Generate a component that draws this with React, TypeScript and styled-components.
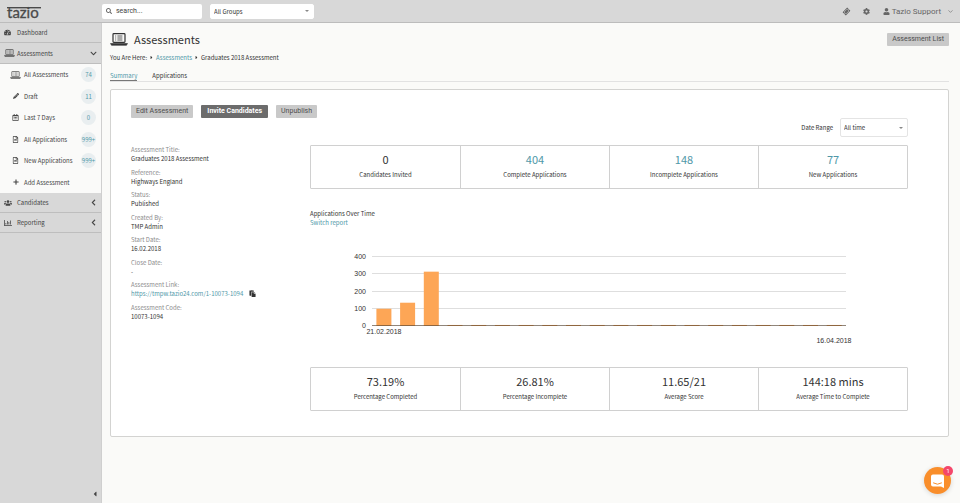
import React from "react";
import styled, { createGlobalStyle } from "styled-components";
import {
  FaTachometerAlt, FaPencilAlt, FaRegCalendarAlt, FaRegFileAlt, FaPlus, FaUsers, FaRegChartBar,
  FaChevronDown, FaChevronLeft, FaCog, FaUser, FaTicketAlt, FaPaste, FaCaretRight, FaCaretLeft, FaSearch,
} from "react-icons/fa";
import { ChevronDown } from "lucide-react";

const source = `"Noto Sans CJK SC", "Noto Sans", sans-serif`;
const ui = `Roboto, "Liberation Sans", sans-serif`;
const teal = "#4f98a8";

const GlobalStyle = createGlobalStyle`
  *, *::before, *::after { box-sizing: border-box; }
  body { margin: 0; background: #fafaf8; color: #333; font: 6px/9px ${source}; }
  button, input, select { font: inherit; color: inherit; margin: 0; }
  a { color: ${teal}; text-decoration: none; }
  h1, h2, p, ul, dl, dd { margin: 0; padding: 0; font-weight: 400; }
  ul { list-style: none; }
  svg { display: block; flex: none; }
`;

const Page = styled.div`
  min-height: 100vh;
  display: flex;
  flex-direction: column;
`;
const TopBar = styled.header`
  display: flex;
  align-items: center;
  height: 23px;
  padding-right: 6px;
  background: #d8d8d8;
  border-bottom: 1px solid #bcbcbc;
  color: #666;
  font: 8px/12px ${ui};
`;
const LogoLink = styled.a`
  width: 102px;
  padding-left: 6px;
`;
const SearchBox = styled.label`
  display: flex;
  align-items: center;
  gap: 4px;
  width: 100px;
  height: 15px;
  padding: 0 4px;
  background: #fff;
  border-radius: 2px;
  font-size: 7px;
`;
const SearchInput = styled.input`
  flex: 1;
  min-width: 0;
  height: 15px;
  padding: 0;
  border: 0;
  outline: 0;
  background: none;
  &::placeholder { color: #444; opacity: 1; }
`;
const SelectWrap = styled.div<{ $width: number; $height: number; $outlined?: boolean }>`
  display: flex;
  align-items: center;
  width: ${(p) => p.$width}px;
  height: ${(p) => p.$height}px;
  padding: 0 4px 0 0;
  background: #fff;
  border-radius: 2px;
  border: 1px solid ${(p) => (p.$outlined ? "#e4e4e4" : "#fff")};
`;
const Select = styled.select`
  flex: 1;
  height: 100%;
  min-width: 0;
  padding: 0 3px;
  border: 0;
  outline: 0;
  appearance: none;
  background: none;
  color: #333;
  font: 6px/9px ${source};
`;
const DropMark = styled.span`
  border: 2px solid transparent;
  border-top-color: #888;
  border-bottom: 0;
`;
const GroupArea = styled.div`
  margin-left: 8px;
`;
const TopActions = styled.div`
  display: flex;
  align-items: center;
  gap: 13px;
  margin-left: auto;
`;
const PlainButton = styled.button`
  display: flex;
  align-items: center;
  gap: 2px;
  padding: 0;
  border: 0;
  background: none;
`;
const UserButton = styled(PlainButton)`
  height: 22px;
  padding-top: 1px;
  svg:last-child { margin-left: 4px; }
`;
const Body = styled.div`
  flex: 1;
  display: flex;
`;
const Sidebar = styled.nav`
  display: flex;
  flex-direction: column;
  width: 102px;
  flex: none;
  background: #d8d8d8;
  border-right: 1px solid #cfcfcf;
  color: #444;
`;
const SideHeading = styled.a<{ $height: number }>`
  display: flex;
  align-items: center;
  gap: 2px;
  height: ${(p) => p.$height}px;
  padding: 0 4px;
  border-bottom: 1px solid #bebebe;
  color: #444;
  svg:last-child:not(:first-child) { margin-left: auto; }
`;
const HeadingIcon = styled.span`
  width: 11px;
`;
const SubIcon = styled.span`
  display: flex;
  justify-content: center;
  width: 11px;
`;
const SubList = styled.ul`
  display: grid;
  grid-template-rows: repeat(6, 1fr);
  height: 129px;
  background: #fafaf9;
`;
const SubLink = styled.a`
  display: flex;
  align-items: center;
  gap: 3px;
  height: 100%;
  padding: 0 5px 0 10px;
  color: #444;
  white-space: nowrap;
`;
const Count = styled.span`
  display: flex;
  align-items: center;
  justify-content: center;
  width: 15px;
  height: 15px;
  margin-left: auto;
  border-radius: 50%;
  background: #e9eef0;
  color: #4f98a8;
`;
const Collapse = styled(PlainButton)`
  margin: auto 2px 5px auto;
`;
const Main = styled.main`
  flex: 1;
  min-width: 0;
  padding: 9px 11px 66px 8px;
`;
const TitleRow = styled.div`
  display: flex;
  align-items: center;
  gap: 6px;
  height: 14px;
`;
const Title = styled.h1`
  font-size: 11px;
  line-height: 14px;
`;
const Button = styled.button<{ $strong?: boolean }>`
  height: 13px;
  padding: 0 ${(p) => (p.$strong ? 6 : 5)}px;
  border: 0;
  border-radius: 1px;
  background: ${(p) => (p.$strong ? "#6c6c6c" : "#c9c9c9")};
  color: ${(p) => (p.$strong ? "#fff" : "#4d4d4d")};
  font: ${(p) => (p.$strong ? 700 : 400)} 7px/13px ${ui};
  white-space: nowrap;
`;
const TitleAction = styled.div`
  display: flex;
  margin-left: auto;
`;
const Crumbs = styled.nav`
  display: flex;
  align-items: center;
  gap: 2px;
  height: 9px;
  margin-top: 7px;
`;
const Tabs = styled.nav`
  display: flex;
  gap: 15px;
  margin-top: 9px;
  border-bottom: 1px solid #e2e2e2;
`;
const Tab = styled.a<{ $active?: boolean }>`
  height: 10px;
  line-height: 9px;
  color: ${(p) => (p.$active ? teal : "#333")};
  border-bottom: 1px solid ${(p) => (p.$active ? "#777" : "transparent")};
`;
const Card = styled.section`
  margin-top: 7px;
  padding: 15px 40px 25px 20px;
  background: #fff;
  border: 1px solid #d3d3d1;
  border-radius: 2px;
`;
const ButtonRow = styled.div`
  display: flex;
  gap: 8px;
`;
const RangeRow = styled.div`
  display: flex;
  align-items: center;
  justify-content: flex-end;
  gap: 7px;
`;
const Columns = styled.div`
  display: grid;
  grid-template-columns: 179px minmax(0, 1fr);
  margin-top: 8px;
`;
const Details = styled.dl`
  display: flex;
  flex-direction: column;
  justify-content: space-between;
  height: 176px;
`;
const Term = styled.dt`
  color: #8c8c8c;
`;
const Value = styled.dd`
  display: flex;
  align-items: center;
  gap: 6px;
  color: #333;
`;
const Stats = styled.div`
  display: grid;
  grid-template-columns: repeat(4, 1fr);
  height: 44px;
  border: 1px solid #d0d0d0;
  border-radius: 1px;
`;
const Stat = styled.div`
  padding-top: 6px;
  text-align: center;
  & + & { border-left: 1px solid #d0d0d0; }
`;
const Figure = styled.p`
  font-size: 11px;
  line-height: 15px;
`;
const Caption = styled.p`
  margin-top: 3px;
`;
const ReportHead = styled.div`
  margin: 20px 0 23px;
`;
const ReportTitle = styled.h2`
  font-size: 6px;
  line-height: 9px;
`;
const Chart = styled.svg`
  width: 100%;
  height: auto;
  margin-bottom: 17px;
  font: 7px "Liberation Sans", sans-serif;
  fill: #333;
`;
const Chat = styled.button`
  position: fixed;
  right: 9px;
  bottom: 9px;
  display: flex;
  align-items: center;
  justify-content: center;
  width: 27px;
  height: 27px;
  padding: 0;
  border: 0;
  border-radius: 50%;
  background: #f98e2b;
  box-shadow: 0 1px 5px rgba(0, 0, 0, 0.15);
`;
const ChatBadge = styled.span`
  position: absolute;
  top: -1px;
  right: -2px;
  width: 10px;
  height: 10px;
  border-radius: 50%;
  background: #f4476b;
  color: #fff;
  font: 6px/10px ${ui};
`;

const Laptop = ({ width = 11 }: { width?: number }) => (
  <svg width={width} viewBox="0 0 18 13" fill="none" stroke="currentColor">
    <rect x="3" y="0.7" width="12" height="8.6" rx="0.8" strokeWidth="1.2" />
    <path d="M5.2 3h1M7.4 3h5M5.2 5h1M7.4 5h5M5.2 7h1M7.4 7h5" strokeWidth="0.8" />
    <path d="M0.5 10.5h17l-1 1.8h-15z" fill="currentColor" strokeWidth="0.6" />
  </svg>
);

const Logo = () => (
  <svg width="40" height="22" viewBox="0 0 40 22" role="img" aria-label="tazio" fill="#4b4b4b">
    <text x="1" y="18" fontFamily="Lato, sans-serif" fontSize="15" stroke="#4b4b4b" strokeWidth="0.3">tazio</text>
    <rect x="1" y="7" width="34" height="1.4" />
  </svg>
);

const subItems = [
  { label: "All Assessments", icon: <Laptop />, count: "74" },
  { label: "Draft", icon: <FaPencilAlt size={6} />, count: "11" },
  { label: "Last 7 Days", icon: <FaRegCalendarAlt size={7} />, count: "0" },
  { label: "All Applications", icon: <FaRegFileAlt size={7} />, count: "999+" },
  { label: "New Applications", icon: <FaRegFileAlt size={7} />, count: "999+" },
  { label: "Add Assessment", icon: <FaPlus size={6} /> },
];

const link = "https://tmpw.tazio24.com/1-10073-1094";
const details: [string, string][] = [
  ["Assessment Title:", "Graduates 2018 Assessment"],
  ["Reference:", "Highways England"],
  ["Status:", "Published"],
  ["Created By:", "TMP Admin"],
  ["Start Date:", "16.02.2018"],
  ["Close Date:", "-"],
  ["Assessment Link:", link],
  ["Assessment Code:", "10073-1094"],
];

type Item = { value: string; label: string; link?: boolean };
const counts: Item[] = [
  { value: "0", label: "Candidates Invited" },
  { value: "404", label: "Complete Applications", link: true },
  { value: "148", label: "Incomplete Applications", link: true },
  { value: "77", label: "New Applications", link: true },
];
const averages: Item[] = [
  { value: "73.19%", label: "Percentage Completed" },
  { value: "26.81%", label: "Percentage Incomplete" },
  { value: "11.65/21", label: "Average Score" },
  { value: "144:18 mins", label: "Average Time to Complete" },
];
const series: number[] = [100, 135, 315, ...Array(17).fill(6)];

const StatRow = ({ items }: { items: Item[] }) => (
  <Stats>
    {items.map((s) => (
      <Stat key={s.label}>
        <Figure>{s.link ? <a href="#list">{s.value}</a> : s.value}</Figure>
        <Caption>{s.label}</Caption>
      </Stat>
    ))}
  </Stats>
);

const baseY = 76;
const left = 62;
const step = 474 / series.length;
const y = (v: number) => baseY - (v / 400) * 69;

const ApplicationsChart = () => (
  <Chart viewBox="0 0 598 100" role="img" aria-label="Applications over time">
    {[400, 300, 200, 100, 0].map((v) => (
      <g key={v}>
        {v > 0 && <rect x={left} y={Math.round(y(v)) - 1} width="474" height="1" fill="#dedede" />}
        <text x="56" y={y(v) + 2} textAnchor="end">{v}</text>
      </g>
    ))}
    {series.map((v, i) => (
      <rect key={i} x={left + i * step + 4.4} y={y(v)} width="15" height={baseY - y(v)} fill="#fda656" />
    ))}
    <rect x={left} y={baseY - 1} width="474" height="1" fill="#554433" opacity="0.65" />
    <text x="74" y="84" textAnchor="middle">21.02.2018</text>
    <text x="524" y="93" textAnchor="middle">16.04.2018</text>
  </Chart>
);

export default function App() {
  return (
    <Page>
      <GlobalStyle />
      <TopBar>
        <LogoLink href="#home"><Logo /></LogoLink>
        <SearchBox>
          <FaSearch size={6} />
          <SearchInput placeholder="search..." aria-label="Search" />
        </SearchBox>
        <GroupArea>
          <SelectWrap $width={104} $height={15}>
            <Select aria-label="Group"><option>All Groups</option></Select>
            <DropMark />
          </SelectWrap>
        </GroupArea>
        <TopActions>
          <PlainButton aria-label="Tickets"><FaTicketAlt size={7} transform="rotate(-45)" /></PlainButton>
          <PlainButton aria-label="Settings"><FaCog size={7} /></PlainButton>
          <UserButton><FaUser size={7} />Tazio Support<ChevronDown size={7} /></UserButton>
        </TopActions>
      </TopBar>
      <Body>
        <Sidebar aria-label="Main">
          <SideHeading href="#dashboard" $height={20}><HeadingIcon><FaTachometerAlt size={7} /></HeadingIcon>Dashboard</SideHeading>
          <SideHeading href="#assessments" $height={21}><HeadingIcon><Laptop /></HeadingIcon>Assessments<FaChevronDown size={7} /></SideHeading>
          <SubList>
            {subItems.map((s) => (
              <li key={s.label}>
                <SubLink href="#assessments">
                  <SubIcon>{s.icon}</SubIcon>
                  {s.label}
                  {s.count && <Count>{s.count}</Count>}
                </SubLink>
              </li>
            ))}
          </SubList>
          <SideHeading href="#candidates" $height={20}><HeadingIcon><FaUsers size={8} /></HeadingIcon>Candidates<FaChevronLeft size={7} /></SideHeading>
          <SideHeading href="#reporting" $height={20}><HeadingIcon><FaRegChartBar size={8} /></HeadingIcon>Reporting<FaChevronLeft size={7} /></SideHeading>
          <Collapse aria-label="Collapse menu"><FaCaretLeft size={8} /></Collapse>
        </Sidebar>
        <Main>
          <TitleRow>
            <Laptop width={18} />
            <Title>Assessments</Title>
            <TitleAction><Button>Assessment List</Button></TitleAction>
          </TitleRow>
          <Crumbs aria-label="Breadcrumb">
            <span>You Are Here:</span>
            <FaCaretRight size={5} />
            <a href="#assessments">Assessments</a>
            <FaCaretRight size={5} />
            <span>Graduates 2018 Assessment</span>
          </Crumbs>
          <Tabs aria-label="Sections">
            <Tab href="#summary" $active>Summary</Tab>
            <Tab href="#applications">Applications</Tab>
          </Tabs>
          <Card>
            <ButtonRow>
              <Button>Edit Assessment</Button>
              <Button $strong>Invite Candidates</Button>
              <Button>Unpublish</Button>
            </ButtonRow>
            <RangeRow>
              <label htmlFor="range">Date Range</label>
              <SelectWrap $width={68} $height={19} $outlined>
                <Select id="range"><option>All time</option></Select>
                <DropMark />
              </SelectWrap>
            </RangeRow>
            <Columns>
              <Details>
                {details.map(([term, value]) => (
                  <div key={term}>
                    <Term>{term}</Term>
                    <Value>
                      {value === link ? (
                        <>
                          <a href={link}>{link}</a>
                          <PlainButton aria-label="Copy link"><FaPaste size={7} /></PlainButton>
                        </>
                      ) : value}
                    </Value>
                  </div>
                ))}
              </Details>
              <div>
                <StatRow items={counts} />
                <ReportHead>
                  <ReportTitle>Applications Over Time</ReportTitle>
                  <a href="#report">Switch report</a>
                </ReportHead>
                <ApplicationsChart />
                <StatRow items={averages} />
              </div>
            </Columns>
          </Card>
        </Main>
      </Body>
      <Chat aria-label="Open chat">
        <svg width="13" height="14" viewBox="0 0 13 14">
          <path d="M2 0.5h9q2 0 2 2V14l-3-1.500H2q-2 0-2-2v-8q0-2 2-2z" fill="#fff" />
          <path d="M2.500 9q4 2.600 8 0" fill="none" stroke="#f98e2b" strokeLinecap="round" />
        </svg>
        <ChatBadge>1</ChatBadge>
      </Chat>
    </Page>
  );
}
